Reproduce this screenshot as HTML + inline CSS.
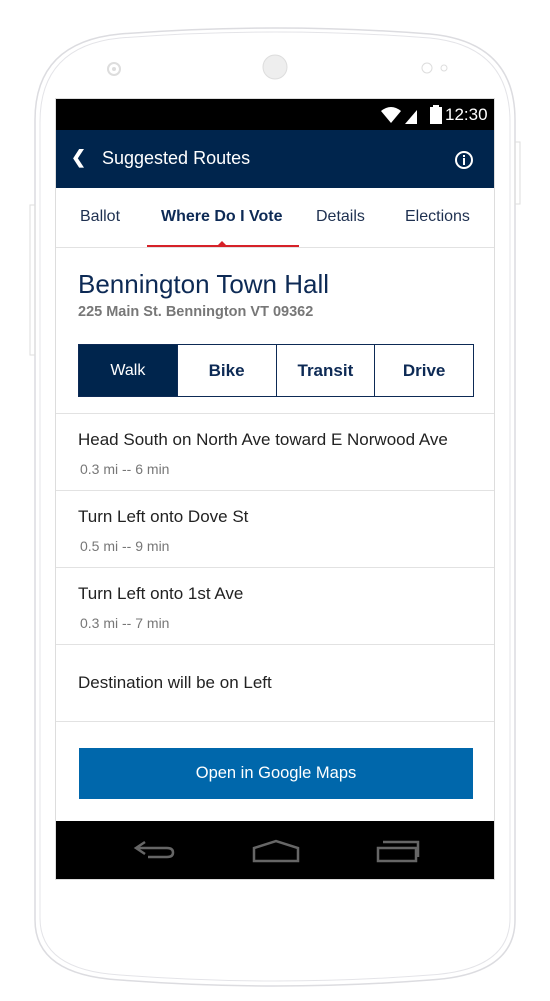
<!DOCTYPE html>
<html><head><style>
*{margin:0;padding:0;box-sizing:border-box}
body{width:550px;height:1001px;background:#fff;position:relative;font-family:"Liberation Sans",sans-serif;overflow:hidden}
.abs{position:absolute}
.screen{left:55px;top:98px;width:440px;height:782px;border:1px solid #ddd;background:#fff;overflow:hidden}
.row{position:absolute;left:0;width:438px;border-top:1px solid #e2e2e2}
.t1{position:absolute;left:22px;font-size:17px;color:#222}
.t2{position:absolute;left:24px;font-size:14px;color:#777}
</style></head><body>
<svg class="abs" style="left:0;top:0" width="550" height="1001">
<path d="M120 34 Q275 22 430 34 Q515 42 515 120 L515 920 Q515 975 430 980 Q275 992 120 980 Q35 975 35 920 L35 120 Q35 42 120 34Z" fill="none" stroke="#dcdce0" stroke-width="1.5"/>
<path d="M120 38 Q275 26 430 38 Q510 46 510 122 L510 918 Q510 970 430 975 Q275 987 120 975 Q40 970 40 918 L40 122 Q40 46 120 38Z" fill="none" stroke="#e4e4e8" stroke-width="1"/>
<rect x="515" y="142" width="5" height="62" fill="none" stroke="#ddd"/>
<rect x="30" y="205" width="5" height="150" fill="none" stroke="#ddd"/>
<circle cx="114" cy="69" r="6" fill="none" stroke="#ddd" stroke-width="2"/><circle cx="114" cy="69" r="2" fill="#ddd"/>
<circle cx="275" cy="67" r="12" fill="#eee" stroke="#ddd"/>
<circle cx="427" cy="68" r="5" fill="none" stroke="#ddd"/><circle cx="444" cy="68" r="3" fill="none" stroke="#ddd"/>
</svg>
<div class="abs screen">
 <div class="abs" style="left:0;top:0;width:438px;height:31px;background:#000"></div>
 <svg class="abs" style="left:322px;top:5px" width="70" height="22">
  <path d="M3 7 Q13 -1 23 7 L13 19Z" fill="#fff"/>
  <path d="M27 20 L39 6 L39 20Z" fill="#fff"/>
  <rect x="52" y="3" width="12" height="17" fill="#fff"/><rect x="55" y="1" width="6" height="3" fill="#fff"/>
 </svg>
 <div class="abs" style="left:389px;top:6px;color:#fff;font-size:17px">12:30</div>
 <div class="abs" style="left:0;top:31px;width:438px;height:58px;background:#00254d"></div>
 <div class="abs" style="left:15px;top:48px;color:#fff;font-size:18px;font-weight:bold">❮</div>
 <div class="abs" style="left:46px;top:49px;color:#fff;font-size:18px">Suggested Routes</div>
 <svg class="abs" style="left:398px;top:51px" width="20" height="20"><circle cx="10" cy="10" r="8" fill="none" stroke="#fff" stroke-width="2"/><rect x="9" y="8" width="2" height="7" fill="#fff"/><rect x="9" y="5" width="2" height="2" fill="#fff"/></svg>
 <div class="abs" style="left:24px;top:109px;font-size:16px;color:#1e3050">Ballot</div>
 <div class="abs" style="left:105px;top:109px;font-size:16px;color:#0d2a55;font-weight:bold">Where Do I Vote</div>
 <div class="abs" style="left:260px;top:109px;font-size:16px;color:#1e3050">Details</div>
 <div class="abs" style="left:349px;top:109px;font-size:16px;color:#1e3050">Elections</div>
 <div class="abs" style="left:91px;top:146px;width:152px;height:2px;background:#d62128"></div>
 <div class="abs" style="left:161px;top:142px;border:5px solid transparent;border-bottom-color:#d62128;border-top:0"></div>
 <div class="abs" style="left:0;top:148px;width:438px;height:1px;background:#e2e2e2"></div>
 <div class="abs" style="left:22px;top:170px;font-size:26px;color:#0d2a55">Bennington Town Hall</div>
 <div class="abs" style="left:22px;top:205px;font-size:14.5px;color:#777;font-weight:bold">225 Main St. Bennington VT 09362</div>
 <div class="abs" style="left:22px;top:245px;width:396px;height:53px;border:1px solid #0d2a55;display:flex">
  <div style="flex:1;background:#00254d;color:#fff;font-size:16px;text-align:center;line-height:51px">Walk</div>
  <div style="flex:1;color:#0d2a55;font-weight:bold;font-size:17px;text-align:center;line-height:51px;border-left:1px solid #0d2a55">Bike</div>
  <div style="flex:1;color:#0d2a55;font-weight:bold;font-size:17px;text-align:center;line-height:51px;border-left:1px solid #0d2a55">Transit</div>
  <div style="flex:1;color:#0d2a55;font-weight:bold;font-size:17px;text-align:center;line-height:51px;border-left:1px solid #0d2a55">Drive</div>
 </div>
 <div class="row" style="top:314px"><div class="t1" style="top:16px">Head South on North Ave toward E Norwood Ave</div><div class="t2" style="top:47px">0.3 mi -- 6 min</div></div>
 <div class="row" style="top:391px"><div class="t1" style="top:16px">Turn Left onto Dove St</div><div class="t2" style="top:47px">0.5 mi -- 9 min</div></div>
 <div class="row" style="top:468px"><div class="t1" style="top:16px">Turn Left onto 1st Ave</div><div class="t2" style="top:47px">0.3 mi -- 7 min</div></div>
 <div class="row" style="top:545px"><div class="t1" style="top:28px">Destination will be on Left</div></div>
 <div class="row" style="top:622px"></div>
 <div class="abs" style="left:23px;top:649px;width:394px;height:51px;background:#0067ab;color:#fff;font-size:16.5px;text-align:center;line-height:51px">Open in Google Maps</div>
 <div class="abs" style="left:0;top:722px;width:438px;height:59px;background:#000"></div>
 <svg class="abs" style="left:0;top:722px" width="438" height="59">
  <path d="M89 21 L80 27 L89 33 M80 27 L111 27 Q117 27 117 31.5 Q117 36 111 36 L92 36" fill="none" stroke="#666" stroke-width="2.5"/>
  <path d="M198 40 L198 27 L220 20 L242 27 L242 40Z" fill="none" stroke="#666" stroke-width="2.5"/>
  <path d="M322 27 L360 27 L360 40 L322 40Z M327 21 L362 21 L362 27 M362 21 L362 36" fill="none" stroke="#666" stroke-width="2.5"/>
 </svg>
</div>
</body></html>
